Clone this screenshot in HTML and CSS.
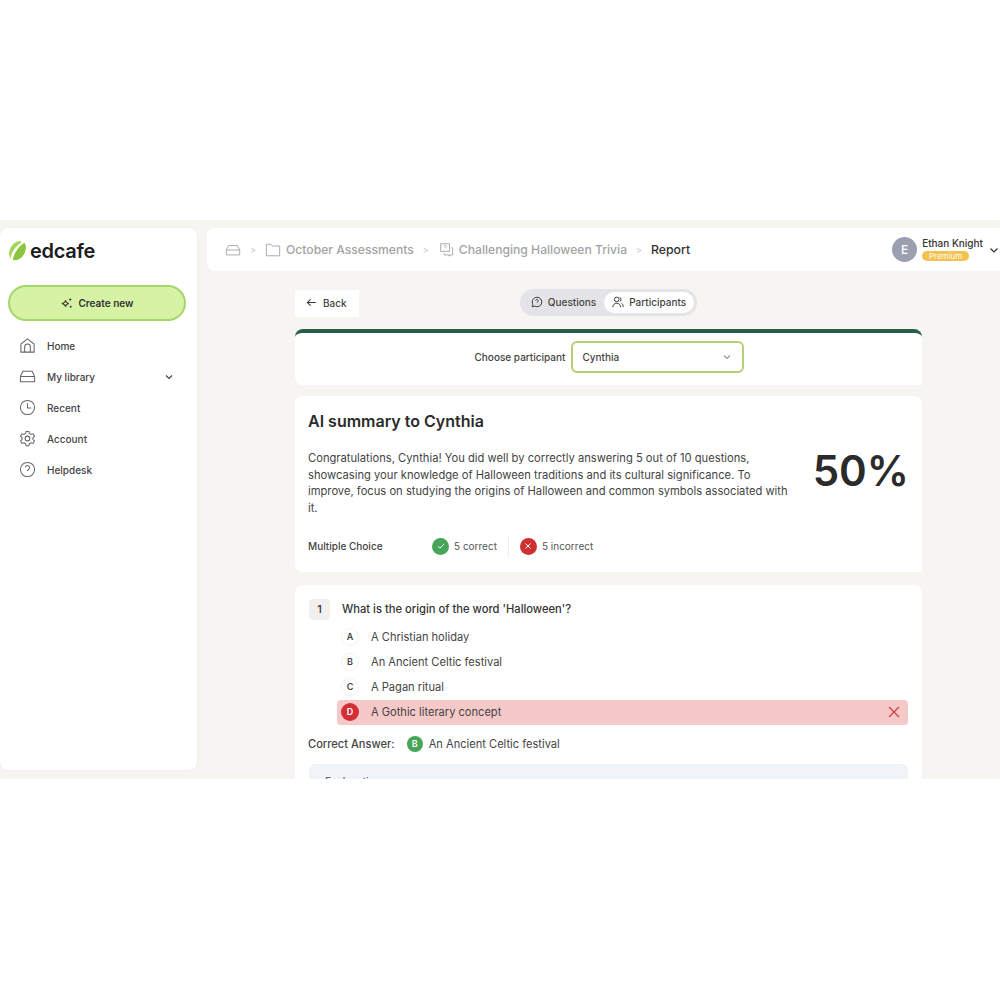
FILE: index.html
```html
<!DOCTYPE html>
<html lang="en">
<head>
    <meta charset="UTF-8">
    <title>Edcafe report</title>
    <link rel="stylesheet" href="styles.css">
</head>
<body>
    <div class="app">
        <aside class="sidebar">
            <div class="logo">
                <svg width="19" height="21" viewBox="0 0 18 20"><path d="M12 1C6 1 1 7 1 13c0 2 .6 3.600 1.500 4.600C3 12 7 6 12.500 2.500 12.400 2 12.200 1.400 12 1z" fill="#a4d65e"/><path d="M15.500 2.500C10 6 6 11.500 4.500 18.800 5.300 19.100 6 19.200 6.800 19.200 12.500 19 17 13 17 7c0-1.800-.5-3.400-1.500-4.500z" fill="#8cc63f"/></svg>
                <span class="logo-text">edcafe</span>
            </div>
            <button class="create-btn">
                <svg width="13" height="13" viewBox="0 0 14 14" fill="none" stroke="#333" stroke-width="1.100"><path d="M6 3.500c.4 2.300 1.300 3.200 3.500 3.500-2.200.4-3.100 1.300-3.500 3.500C5.600 8.300 4.700 7.400 2 7c2.700-.3 3.600-1.200 4-3.500z"/><path d="M11 1.500v2.500M9.800 2.700h2.400M11.500 9.500v2M10.500 10.500h2"/></svg>
                Create new
            </button>
            <nav class="nav">
                <a class="nav-item">
                    <svg class="nav-icon" viewBox="0 0 18 18"><path d="M2 16V7.500L9 2l7 5.500V16z"/><path d="M6 16v-5.500a3 3 0 0 1 6 0V16"/></svg>
                    Home
                </a>
                <a class="nav-item">
                    <svg class="nav-icon" viewBox="0 0 18 18"><path d="M1.500 9l2.500-5.500h10L16.500 9v5.500h-15z"/><path d="M1.500 9h15M4.500 12h.1M6.500 12h.1"/></svg>
                    My library
                    <svg class="nav-caret" width="10" height="10" viewBox="0 0 10 10"><path d="M2 3.500l3 3 3-3"/></svg>
                </a>
                <a class="nav-item">
                    <svg class="nav-icon" viewBox="0 0 18 18"><circle cx="9" cy="9" r="7.500"/><path d="M9 4.500V9.500h4"/></svg>
                    Recent
                </a>
                <a class="nav-item">
                    <svg class="nav-icon" viewBox="0 0 18 18"><path d="M7.500 1.500h3l.5 2.200 1.800 1 2.100-.7 1.500 2.600-1.600 1.500v2l1.600 1.500-1.500 2.600-2.100-.7-1.800 1-.5 2.200h-3l-.5-2.200-1.800-1-2.100.7-1.500-2.600L3.200 10V8L1.600 6.600l1.500-2.600 2.100.7 1.800-1z"/><circle cx="9" cy="9" r="2.500"/></svg>
                    Account
                </a>
                <a class="nav-item">
                    <svg class="nav-icon" viewBox="0 0 18 18"><circle cx="9" cy="9" r="7.500"/><path d="M6.800 7a2.200 2.200 0 1 1 3.200 2c-.7.400-1 .8-1 1.500M9 13v.1"/></svg>
                    Helpdesk
                </a>
            </nav>
        </aside>

        <div class="main">
            <header class="topbar">
                <div class="crumbs">
                    <svg class="crumb-icon" width="16" height="16" viewBox="0 0 18 18"><path d="M1.500 9l2.500-5h10l2.500 5v5.500h-15z"/><path d="M1.500 9h15"/></svg>
                    <span class="crumb-sep">&gt;</span>
                    <svg class="crumb-icon" width="16" height="16" viewBox="0 0 18 18"><path d="M1.500 15.500v-13h5l1.500 2h8.500v11z"/></svg>
                    <span class="crumb">October Assessments</span>
                    <span class="crumb-sep">&gt;</span>
                    <svg class="crumb-icon" width="16" height="16" viewBox="0 0 18 18"><path d="M3 2h10v8.500H6.500L3 11z"/><path d="M15 6.500h1.500v8H13v1.500l-2-1.500H7V12.500"/><path d="M7 5a1.200 1.200 0 1 1 1.800 1.100L8 6.800M8 8.300v.1"/></svg>
                    <span class="crumb">Challenging Halloween Trivia</span>
                    <span class="crumb-sep">&gt;</span>
                    <span class="crumb-current">Report</span>
                </div>
                <div class="user">
                    <div class="avatar">E</div>
                    <div class="user-info">
                        <div class="user-name">Ethan Knight</div>
                        <div class="badge">Premium</div>
                    </div>
                    <svg class="user-caret" width="10" height="10" viewBox="0 0 10 10"><path d="M1.500 3.500L5 7l3.500-3.500"/></svg>
                </div>
            </header>

            <div class="content">
                <div class="toolbar">
                    <button class="back-btn">
                        <svg width="11" height="11" viewBox="0 0 12 12" fill="none" stroke="#333" stroke-width="1.100"><path d="M10.500 6h-9M5 2.500L1.500 6 5 9.500"/></svg>
                        Back
                    </button>
                    <div class="tabs">
                        <div class="tab">
                            <svg width="12" height="12" viewBox="0 0 14 14" fill="none" stroke="#333" stroke-width="1.100"><path d="M7 1.500a5.500 5.500 0 1 1-2.600 10.300L1.500 12.500l.7-2.800A5.500 5.500 0 0 1 7 1.500z"/><path d="M5.500 5.500a1.500 1.500 0 1 1 2.200 1.400c-.5.300-.7.500-.7 1M7 9.700v.1"/></svg>
                            Questions
                        </div>
                        <div class="tab tab-active">
                            <svg width="12" height="12" viewBox="0 0 14 14" fill="none" stroke="#333" stroke-width="1.100"><circle cx="5.500" cy="4" r="2.700"/><path d="M1 13c0-3 2-4.500 4.500-4.500S10 10 10 13M9 1.500c2 .5 2 4.500 0 5M11 8.500c1.500.7 2 2.300 2 4.500"/></svg>
                            Participants
                        </div>
                    </div>
                </div>

                <section class="card picker">
                    <span class="picker-label">Choose participant</span>
                    <div class="select">
                        Cynthia
                        <svg width="10" height="10" viewBox="0 0 10 10"><path d="M2 3.500l3 3 3-3"/></svg>
                    </div>
                </section>

                <section class="card summary">
                    <h2 class="summary-title">AI summary to Cynthia</h2>
                    <div class="summary-body">
                        <p class="summary-text">Congratulations, Cynthia! You did well by correctly answering 5 out of 10 questions, showcasing your knowledge of Halloween traditions and its cultural significance. To improve, focus on studying the origins of Halloween and common symbols associated with it.</p>
                        <div class="score">50%</div>
                    </div>
                    <div class="stats">
                        <span class="stats-label">Multiple Choice</span>
                        <span class="stat">
                            <span class="dot dot-green"><svg width="8" height="8" viewBox="0 0 8 8"><path d="M1 4.200l2 2L7 2"/></svg></span>
                            5 correct
                        </span>
                        <span class="stats-divider"></span>
                        <span class="stat">
                            <span class="dot dot-red"><svg width="8" height="8" viewBox="0 0 8 8"><path d="M1.500 1.500l5 5M6.500 1.500l-5 5"/></svg></span>
                            5 incorrect
                        </span>
                    </div>
                </section>

                <section class="card question">
                    <div class="question-head">
                        <span class="question-num">1</span>
                        <span class="question-text">What is the origin of the word 'Halloween'?</span>
                    </div>
                    <div class="options">
                        <div class="option"><span class="letter">A</span>A Christian holiday</div>
                        <div class="option"><span class="letter">B</span>An Ancient Celtic festival</div>
                        <div class="option"><span class="letter">C</span>A Pagan ritual</div>
                        <div class="option option-wrong">
                            <span class="letter letter-red">D</span>A Gothic literary concept
                            <svg class="wrong-x" width="12" height="12" viewBox="0 0 12 12"><path d="M1 1l10 10M11 1L1 11"/></svg>
                        </div>
                    </div>
                    <div class="answer">
                        <span class="answer-label">Correct Answer:</span>
                        <span class="letter letter-green">B</span>
                        An Ancient Celtic festival
                    </div>
                    <div class="explain">Explanation</div>
                </section>
            </div>
        </div>
    </div>
</body>
</html>
```

FILE: styles.css
```css
* {
    box-sizing: border-box;
}
body {
    margin: 0;
    padding-top: 220px;
    height: 1000px;
    background-color: #fff;
    font-family: Inter, "Liberation Sans", sans-serif;
    color: #333;
}
.app {
    display: flex;
    gap: 10px;
    height: 559px;
    padding-top: 8px;
    overflow: hidden;
    background-color: #f6f5f2;
}
.sidebar {
    flex: 0 0 197px;
    height: 542px;
    padding: 10px 8px;
    background: #fff;
    border-radius: 8px;
    box-shadow: 0 0 2px rgba(0, 0, 0, 0.08);
}
.logo {
    display: flex;
    align-items: center;
    gap: 3px;
    height: 25px;
}
.logo-text {
    font-size: 20px;
    font-weight: 600;
    letter-spacing: -0.3px;
    color: #1c1c1c;
}
.create-btn {
    display: flex;
    align-items: center;
    justify-content: center;
    gap: 5px;
    width: 178px;
    height: 36px;
    margin-top: 22px;
    background: #d5f2a5;
    border: 2px solid #a5d66a;
    border-radius: 18px;
    font-family: inherit;
    font-size: 10px;
    font-weight: 600;
    color: #333;
}
.nav {
    margin-top: 9px;
    padding-left: 11px;
}
.nav-item {
    display: flex;
    align-items: center;
    gap: 11px;
    height: 31px;
    font-size: 10px;
    font-weight: 500;
    color: #444;
}
.nav-icon {
    width: 17px;
    height: 17px;
    fill: none;
    stroke: #666;
    stroke-width: 1.100;
}
.nav-caret {
    margin-left: auto;
    margin-right: 15px;
    fill: none;
    stroke: #444;
    stroke-width: 1.200;
}
.main {
    flex: 1;
    min-width: 0;
}
.topbar {
    display: flex;
    align-items: center;
    justify-content: space-between;
    height: 43px;
    padding: 0 1px 0 18px;
    background: #fff;
    border-radius: 8px 0 0 8px;
}
.crumbs {
    display: flex;
    align-items: center;
    gap: 5px;
}
.crumb-icon {
    fill: none;
    stroke: #aaa;
    stroke-width: 1.100;
}
.crumb {
    font-size: 12.150px;
    font-weight: 500;
    color: #a3a3a3;
}
.crumb-sep {
    margin: 0 4px;
    font-size: 9px;
    color: #c4c4c4;
}
.crumb-current {
    font-size: 12.300px;
    font-weight: 500;
    color: #333;
}
.user {
    display: flex;
    align-items: center;
    gap: 5px;
}
.avatar {
    width: 25px;
    height: 25px;
    border-radius: 50%;
    background: #9c9fb0;
    color: #fff;
    font-size: 12px;
    font-weight: 500;
    line-height: 25px;
    text-align: center;
}
.user-name {
    margin-top: -1px;
    font-size: 10px;
    font-weight: 500;
    color: #333;
    line-height: 13px;
}
.badge {
    width: 47px;
    height: 10px;
    margin-top: 1px;
    background: #f2c14e;
    border-radius: 5px;
    color: #fff;
    font-size: 8px;
    line-height: 10px;
    text-align: center;
}
.user-caret {
    margin-left: 1px;
    fill: none;
    stroke: #333;
    stroke-width: 1.200;
}
.content {
    width: 627px;
    margin-left: 88px;
}
.toolbar {
    position: relative;
    display: flex;
    justify-content: center;
    height: 58px;
    padding-top: 18px;
}
.back-btn {
    position: absolute;
    left: 0;
    top: 19px;
    display: flex;
    align-items: center;
    gap: 6px;
    width: 64px;
    height: 27px;
    padding: 0 0 2px 11px;
    background: #fff;
    border: none;
    font-family: inherit;
    font-size: 10px;
    font-weight: 500;
    color: #444;
}
.tabs {
    display: flex;
    align-items: center;
    height: 27px;
    padding: 0 3px 1px 11px;
    background: #e4e3e7;
    border-radius: 14px;
    font-size: 10px;
    font-weight: 500;
    color: #444;
}
.tab {
    display: flex;
    align-items: center;
    gap: 5px;
    padding-right: 8px;
}
.tab-active {
    height: 21px;
    padding: 0 8px;
    background: #fff;
    border-radius: 11px;
}
.card {
    background: #fff;
    border-radius: 8px;
}
.picker {
    display: flex;
    align-items: center;
    justify-content: center;
    gap: 6px;
    height: 56px;
    padding: 0 0 4px 2px;
    border-top: 4px solid #2a5f47;
    border-radius: 8px 8px 0 8px;
}
.picker-label {
    font-size: 10px;
    font-weight: 500;
    color: #444;
}
.select {
    display: flex;
    align-items: center;
    justify-content: space-between;
    width: 173px;
    height: 32px;
    padding: 0 10px 0 9px;
    border: 2px solid #b4d070;
    border-radius: 6px;
    font-size: 10px;
    font-weight: 500;
    color: #444;
}
.select svg {
    fill: none;
    stroke: #999;
    stroke-width: 1.200;
}
.summary {
    height: 176px;
    margin-top: 11px;
    padding: 15px 14px 0 13px;
    border-radius: 8px 8px 0 8px;
}
.summary-title {
    margin: 0;
    font-size: 16px;
    font-weight: 600;
    line-height: 21px;
    color: #2b2b2b;
}
.summary-body {
    display: flex;
    justify-content: space-between;
    margin-top: 18px;
}
.summary-text {
    width: 484px;
    margin: 0;
    font-size: 11.200px;
    line-height: 16.500px;
    color: #444;
}
.score {
    margin-top: -7px;
    margin-right: -1px;
    font-size: 42px;
    font-weight: 600;
    line-height: 56px;
    color: #2b2b2b;
}
.stats {
    display: flex;
    align-items: center;
    height: 24px;
    margin-top: 18px;
    font-size: 10px;
    color: #555;
}
.stats-label {
    width: 124px;
    font-weight: 500;
    color: #444;
}
.stat {
    display: flex;
    align-items: center;
    gap: 5px;
}
.stats-divider {
    width: 1px;
    height: 22px;
    margin: 0 11px 0 11px;
    background: #f0efec;
}
.dot {
    display: flex;
    align-items: center;
    justify-content: center;
    width: 17px;
    height: 17px;
    border-radius: 50%;
}
.dot svg {
    fill: none;
    stroke: #fff;
    stroke-width: 1;
}
.dot-green {
    background: #47a55a;
}
.dot-red {
    background: #cf3030;
}
.question {
    height: 220px;
    margin-top: 13px;
    padding: 14px 14px 0 13px;
}
.question-head {
    display: flex;
    align-items: center;
    gap: 12px;
}
.question-num {
    width: 21px;
    height: 21px;
    margin-left: 1px;
    background: #f1f0ee;
    border-radius: 4px;
    font-size: 11px;
    font-weight: 500;
    line-height: 21px;
    text-align: center;
}
.question-text {
    padding-bottom: 1px;
    font-size: 11.200px;
    font-weight: 500;
    color: #333;
}
.options {
    margin: 5px 0 0 29px;
}
.option {
    display: flex;
    align-items: center;
    height: 25px;
    padding: 0 0 1px 4px;
    font-size: 11.100px;
    color: #444;
}
.option-wrong {
    background: #f6c9c9;
    border-radius: 4px;
}
.wrong-x {
    margin-left: auto;
    margin-right: 8px;
    fill: none;
    stroke: #cf4040;
    stroke-width: 1.300;
}
.letter {
    flex: none;
    width: 18px;
    height: 18px;
    margin-right: 12px;
    border: 1px solid #f3f3f3;
    border-radius: 50%;
    font-size: 9px;
    font-weight: 600;
    line-height: 16px;
    text-align: center;
}
.letter-red {
    background: #d42f36;
    border: none;
    color: #fff;
    line-height: 18px;
}
.letter-green {
    width: 16px;
    height: 16px;
    margin-right: 6px;
    background: #47a55a;
    border: none;
    color: #fff;
    line-height: 16px;
}
.answer {
    display: flex;
    align-items: center;
    height: 18px;
    margin-top: 10px;
    font-size: 11.100px;
    color: #444;
}
.answer-label {
    margin-right: 12px;
    font-weight: 500;
}
.explain {
    height: 40px;
    margin: 11px 0 0 1px;
    padding: 11px 16px;
    background: #f0f4f8;
    border-radius: 6px;
    font-size: 10px;
    font-weight: 500;
    color: #666;
}
```
